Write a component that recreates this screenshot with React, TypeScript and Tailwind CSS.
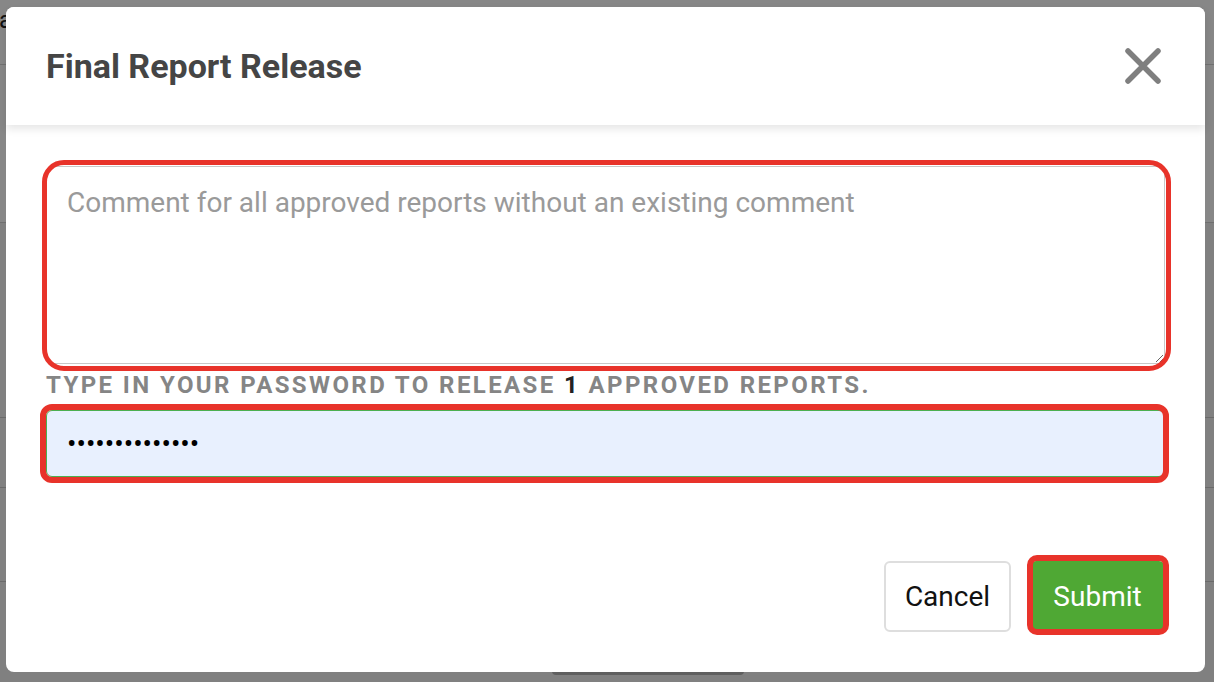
import { useState } from "react";

const RED = "border-[#e8332a]";

function CloseIcon() {
  return (
    <svg width="36" height="36" viewBox="0 0 36 36" fill="none">
      <path
        d="M3 3L33 33M33 3L3 33"
        stroke="#7f7f7f"
        strokeWidth="5.5"
        strokeLinecap="round"
      />
    </svg>
  );
}

function BackgroundPage() {
  return (
    <div className="flex h-full w-full flex-col bg-[#f1f1f1] font-['Roboto',sans-serif]">
      <div className="flex h-[65px] items-start gap-[150px] border-b border-[#d6d6d6] bg-white pt-[2px] text-[24px] text-[#222]">
        <span className="-ml-[1px]">a</span>
        <span className="flex items-center gap-[14px]">
          <span className="h-[20px] w-[18px] border-2 border-[#222]" />
          Work Summary
        </span>
        <span>Analytics</span>
        <span>My Reports</span>
      </div>
      <div className="h-[158px] border-b border-[#d2d2d2] bg-white" />
      <div className="h-[195px] border-b border-[#c8c8c8]" />
      <div className="h-[70px] border-b border-[#c8c8c8]" />
      <div className="h-[94px] border-b border-[#c8c8c8]" />
      <div className="flex flex-1 items-start pl-[552px] pt-[89px]">
        <div className="h-[4px] w-[192px] rounded-b-[4px] bg-[#b4b4b4]" />
      </div>
    </div>
  );
}

export default function App() {
  const [comment, setComment] = useState("");
  const [password, setPassword] = useState("xxxxxxxxxxxxxx");

  return (
    <div className="relative h-[682px] w-[1214px] overflow-hidden font-['Roboto',sans-serif]">
      <BackgroundPage />

      <div className="absolute inset-0 flex items-start bg-black/[0.47] pl-[6px] pt-[7px]">
        <div className="flex h-[665px] w-[1199px] flex-col rounded-[8px] bg-white">
          <div className="relative z-10 flex h-[118px] shrink-0 items-center justify-between rounded-t-[8px] bg-white pl-[40px] pr-[44px] shadow-[0_4px_8px_rgba(0,0,0,0.10)]">
            <h2 className="text-[34px] font-bold text-[#454545]">
              Final Report Release
            </h2>
            <button className="flex items-center justify-center">
              <CloseIcon />
            </button>
          </div>

          <div className="flex flex-1 flex-col px-[40px] pt-[41px]">
            <div className="relative">
              <textarea
                value={comment}
                onChange={(e) => setComment(e.target.value)}
                placeholder="Comment for all approved reports without an existing comment"
                className="block h-[198px] w-full rounded-[6px] border border-[#c8c8c8] bg-white px-[20px] pt-[16px] text-[28px] leading-[40px] text-[#333] placeholder:text-[#9a9a9a] focus:outline-none"
              />
              <div
                className={`pointer-events-none absolute -bottom-[7px] -left-[4px] -right-[6px] -top-[6px] rounded-[22px] border-[5px] ${RED}`}
              />
            </div>

            <p className="mt-[7px] text-[24px] font-bold uppercase leading-[29px] tracking-[0.1em] text-[#858585]">
              Type in your password to release{" "}
              <span className="text-[#222]">1</span> approved reports.
            </p>

            <div className="relative mt-[10px]">
              <input
                type="password"
                value={password}
                onChange={(e) => setPassword(e.target.value)}
                className="block h-[67px] w-full rounded-[6px] border border-[#4caf50] bg-[#e8f0fe] px-[20px] text-[28px] text-black focus:outline-none"
              />
              <div
                className={`pointer-events-none absolute -bottom-[6px] -left-[6px] -right-[4px] -top-[6px] rounded-[12px] border-[6px] ${RED}`}
              />
            </div>

            <div className="mt-auto flex justify-end gap-[19px] pb-[40px]">
              <button className="h-[71px] w-[127px] rounded-[6px] border-2 border-[#dedede] bg-white text-[28px] text-[#111]">
                Cancel
              </button>
              <div className="relative">
                <button className="h-[71px] w-[135px] rounded-[6px] bg-[#4fa834] text-[28px] text-white">
                  Submit
                </button>
                <div
                  className={`pointer-events-none absolute -bottom-[3px] -left-[3px] -right-[4px] -top-[6px] rounded-[10px] border-[6px] ${RED}`}
                />
              </div>
            </div>
          </div>
        </div>
      </div>
    </div>
  );
}
